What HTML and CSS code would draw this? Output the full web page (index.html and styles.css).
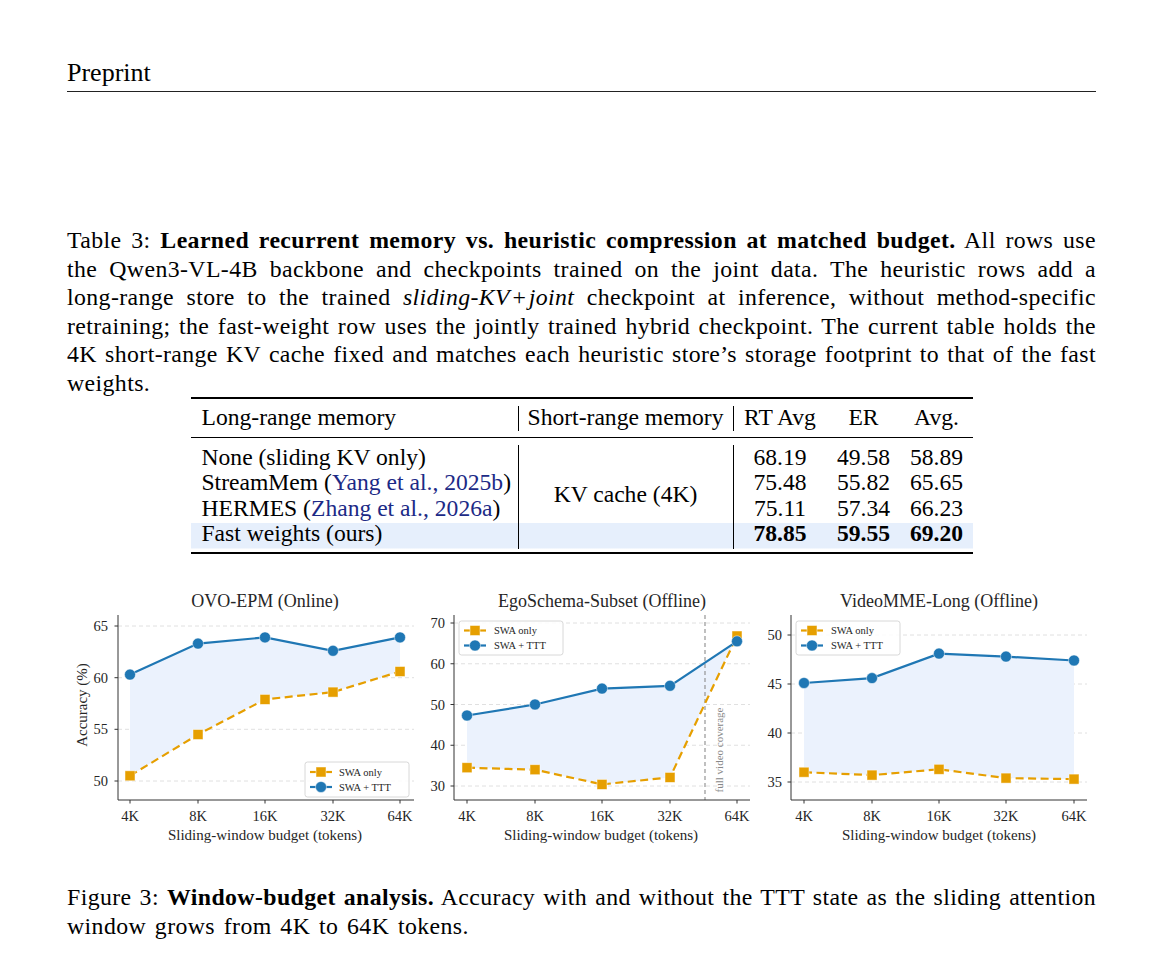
FILE: index.html
```html
<!DOCTYPE html>
<html lang="en">
<head>
  <meta charset="UTF-8">
  <meta name="viewport" content="width=device-width, initial-scale=1.0">
  <title>Preprint – Table 3 and Figure 3</title>
  <link rel="stylesheet" href="styles.css">
</head>
<body>
  <div class="page">

    <div class="running-head">Preprint</div>

    <p class="caption table-caption">
      <span class="line">Table 3: <b>Learned recurrent memory vs. heuristic compression at matched budget.</b> All rows use</span>
      <span class="line">the Qwen3-VL-4B backbone and checkpoints trained on the joint data. The heuristic rows add a</span>
      <span class="line">long-range store to the trained <i>sliding-KV</i>&#8202;+&#8202;<i>joint</i> checkpoint at inference, without method-specific</span>
      <span class="line">retraining; the fast-weight row uses the jointly trained hybrid checkpoint. The current table holds the</span>
      <span class="line">4K short-range KV cache fixed and matches each heuristic store’s storage footprint to that of the fast</span>
      <span class="line last">weights.</span>
    </p>

    <div class="results">
      <div class="results-head">
        <div class="hcell first">Long-range memory</div>
        <div class="hcell sep">Short-range memory</div>
        <div class="hcell">RT Avg</div>
        <div class="hcell">ER</div>
        <div class="hcell">Avg.</div>
      </div>
      <div class="results-body">
        <div class="cell first">None (sliding KV only)</div>
        <div class="cell kv">KV cache (4K)</div>
        <div class="cell">68.19</div>
        <div class="cell">49.58</div>
        <div class="cell">58.89</div>

        <div class="cell first">StreamMem (<a class="cite">Yang et al., 2025b</a>)</div>
        <div class="cell">75.48</div>
        <div class="cell">55.82</div>
        <div class="cell">65.65</div>

        <div class="cell first">HERMES (<a class="cite">Zhang et al., 2026a</a>)</div>
        <div class="cell">75.11</div>
        <div class="cell">57.34</div>
        <div class="cell">66.23</div>

        <div class="cell first">Fast weights (ours)</div>
        <div class="cell best">78.85</div>
        <div class="cell best">59.55</div>
        <div class="cell best">69.20</div>
      </div>
    </div>

    <div class="figure-row">
      <!-- OVO-EPM -->
      <svg class="chart" width="353" height="262" viewBox="0 0 353 262">
        <text class="c-title" x="198" y="19">OVO-EPM (Online)</text>
        <g class="grid">
          <line x1="51" x2="347" y1="193" y2="193"/>
          <line x1="51" x2="347" y1="141.3" y2="141.3"/>
          <line x1="51" x2="347" y1="89.7" y2="89.7"/>
          <line x1="51" x2="347" y1="38" y2="38"/>
        </g>
        <polygon class="gap" points="63,86.6 131,55.6 198,49.4 266,62.8 333,49.4 333,83.5 266,104.1 198,111.4 131,146.5 63,187.8"/>
        <polyline class="swa" points="63,187.8 131,146.5 198,111.4 266,104.1 333,83.5"/>
        <g class="sq">
          <rect x="58" y="182.8" width="10" height="10"/>
          <rect x="126" y="141.5" width="10" height="10"/>
          <rect x="193" y="106.4" width="10" height="10"/>
          <rect x="261" y="99.1" width="10" height="10"/>
          <rect x="328" y="78.5" width="10" height="10"/>
        </g>
        <polyline class="ttt" points="63,86.6 131,55.6 198,49.4 266,62.8 333,49.4"/>
        <g class="dot">
          <circle cx="63" cy="86.6" r="5.5"/>
          <circle cx="131" cy="55.6" r="5.5"/>
          <circle cx="198" cy="49.4" r="5.5"/>
          <circle cx="266" cy="62.8" r="5.5"/>
          <circle cx="333" cy="49.4" r="5.5"/>
        </g>
        <g class="axis">
          <line x1="51" x2="51" y1="27" y2="212"/>
          <line x1="51" x2="347" y1="212" y2="212"/>
          <line x1="47.5" x2="51" y1="193" y2="193"/>
          <line x1="47.5" x2="51" y1="141.3" y2="141.3"/>
          <line x1="47.5" x2="51" y1="89.7" y2="89.7"/>
          <line x1="47.5" x2="51" y1="38" y2="38"/>
          <line x1="63" x2="63" y1="212" y2="215.5"/>
          <line x1="131" x2="131" y1="212" y2="215.5"/>
          <line x1="198" x2="198" y1="212" y2="215.5"/>
          <line x1="266" x2="266" y1="212" y2="215.5"/>
          <line x1="333" x2="333" y1="212" y2="215.5"/>
        </g>
        <g class="ytick">
          <text x="41" y="198">50</text>
          <text x="41" y="146.3">55</text>
          <text x="41" y="94.7">60</text>
          <text x="41" y="43">65</text>
        </g>
        <g class="xtick">
          <text x="63" y="233">4K</text>
          <text x="131" y="233">8K</text>
          <text x="198" y="233">16K</text>
          <text x="266" y="233">32K</text>
          <text x="333" y="233">64K</text>
        </g>
        <text class="c-label" x="198" y="252">Sliding-window budget (tokens)</text>
        <text class="c-label" x="20" y="117" transform="rotate(-90 20 117)">Accuracy (%)</text>
        <g class="legend">
          <rect class="box" x="238" y="174" width="104" height="35" rx="2.5"/>
          <line class="swa" x1="243" x2="265" y1="184" y2="184"/>
          <rect class="sq-l" x="249" y="179" width="10" height="10"/>
          <line class="ttt" x1="243" x2="265" y1="199" y2="199"/>
          <circle class="dot-l" cx="254" cy="199" r="5.5"/>
          <text x="272" y="187.5">SWA only</text>
          <text x="272" y="202.5">SWA + TTT</text>
        </g>
      </svg>

      <!-- EgoSchema-Subset -->
      <svg class="chart" width="337" height="262" viewBox="0 0 337 262">
        <text class="c-title" x="182" y="19">EgoSchema-Subset (Offline)</text>
        <g class="grid">
          <line x1="34" x2="330" y1="198" y2="198"/>
          <line x1="34" x2="330" y1="157.25" y2="157.25"/>
          <line x1="34" x2="330" y1="116.5" y2="116.5"/>
          <line x1="34" x2="330" y1="75.75" y2="75.75"/>
          <line x1="34" x2="330" y1="35" y2="35"/>
        </g>
        <polygon class="gap" points="47,127.5 115,116.5 182,100.6 250,97.8 317,53.3 317,48 250,189.4 182,196.4 115,181.7 47,179.7"/>
        <line class="cover" x1="285" x2="285" y1="27" y2="212"/>
        <text class="cover-note" x="303" y="162" transform="rotate(-90 303 162)">full video coverage</text>
        <polyline class="swa" points="47,179.7 115,181.7 182,196.4 250,189.4 317,48"/>
        <g class="sq">
          <rect x="42" y="174.7" width="10" height="10"/>
          <rect x="110" y="176.7" width="10" height="10"/>
          <rect x="177" y="191.4" width="10" height="10"/>
          <rect x="245" y="184.4" width="10" height="10"/>
          <rect x="312" y="43" width="10" height="10"/>
        </g>
        <polyline class="ttt" points="47,127.5 115,116.5 182,100.6 250,97.8 317,53.3"/>
        <g class="dot">
          <circle cx="47" cy="127.5" r="5.5"/>
          <circle cx="115" cy="116.5" r="5.5"/>
          <circle cx="182" cy="100.6" r="5.5"/>
          <circle cx="250" cy="97.8" r="5.5"/>
          <circle cx="317" cy="53.3" r="5.5"/>
        </g>
        <g class="axis">
          <line x1="34" x2="34" y1="27" y2="212"/>
          <line x1="34" x2="330" y1="212" y2="212"/>
          <line x1="30.5" x2="34" y1="198" y2="198"/>
          <line x1="30.5" x2="34" y1="157.25" y2="157.25"/>
          <line x1="30.5" x2="34" y1="116.5" y2="116.5"/>
          <line x1="30.5" x2="34" y1="75.75" y2="75.75"/>
          <line x1="30.5" x2="34" y1="35" y2="35"/>
          <line x1="47" x2="47" y1="212" y2="215.5"/>
          <line x1="115" x2="115" y1="212" y2="215.5"/>
          <line x1="182" x2="182" y1="212" y2="215.5"/>
          <line x1="250" x2="250" y1="212" y2="215.5"/>
          <line x1="317" x2="317" y1="212" y2="215.5"/>
        </g>
        <g class="ytick">
          <text x="25" y="203">30</text>
          <text x="25" y="162.25">40</text>
          <text x="25" y="121.5">50</text>
          <text x="25" y="80.75">60</text>
          <text x="25" y="40">70</text>
        </g>
        <g class="xtick">
          <text x="47" y="233">4K</text>
          <text x="115" y="233">8K</text>
          <text x="182" y="233">16K</text>
          <text x="250" y="233">32K</text>
          <text x="317" y="233">64K</text>
        </g>
        <text class="c-label" x="181" y="252">Sliding-window budget (tokens)</text>
        <g class="legend">
          <rect class="box" x="39" y="33" width="104" height="34" rx="2.5"/>
          <line class="swa" x1="44" x2="66" y1="42.5" y2="42.5"/>
          <rect class="sq-l" x="50" y="37.5" width="10" height="10"/>
          <line class="ttt" x1="44" x2="66" y1="57.5" y2="57.5"/>
          <circle class="dot-l" cx="55" cy="57.5" r="5.5"/>
          <text x="74" y="46">SWA only</text>
          <text x="74" y="61">SWA + TTT</text>
        </g>
      </svg>

      <!-- VideoMME-Long -->
      <svg class="chart" width="339" height="262" viewBox="0 0 339 262">
        <text class="c-title" x="182" y="19">VideoMME-Long (Offline)</text>
        <g class="grid">
          <line x1="34" x2="330" y1="194" y2="194"/>
          <line x1="34" x2="330" y1="145" y2="145"/>
          <line x1="34" x2="330" y1="96" y2="96"/>
          <line x1="34" x2="330" y1="47" y2="47"/>
        </g>
        <polygon class="gap" points="47,95 115,90.1 182,65.6 249,68.6 317,72.5 317,191.1 249,190.1 182,181.3 115,187.1 47,184.2"/>
        <polyline class="swa" points="47,184.2 115,187.1 182,181.3 249,190.1 317,191.1"/>
        <g class="sq">
          <rect x="42" y="179.2" width="10" height="10"/>
          <rect x="110" y="182.1" width="10" height="10"/>
          <rect x="177" y="176.3" width="10" height="10"/>
          <rect x="244" y="185.1" width="10" height="10"/>
          <rect x="312" y="186.1" width="10" height="10"/>
        </g>
        <polyline class="ttt" points="47,95 115,90.1 182,65.6 249,68.6 317,72.5"/>
        <g class="dot">
          <circle cx="47" cy="95" r="5.5"/>
          <circle cx="115" cy="90.1" r="5.5"/>
          <circle cx="182" cy="65.6" r="5.5"/>
          <circle cx="249" cy="68.6" r="5.5"/>
          <circle cx="317" cy="72.5" r="5.5"/>
        </g>
        <g class="axis">
          <line x1="34" x2="34" y1="27" y2="212"/>
          <line x1="34" x2="330" y1="212" y2="212"/>
          <line x1="30.5" x2="34" y1="194" y2="194"/>
          <line x1="30.5" x2="34" y1="145" y2="145"/>
          <line x1="30.5" x2="34" y1="96" y2="96"/>
          <line x1="30.5" x2="34" y1="47" y2="47"/>
          <line x1="47" x2="47" y1="212" y2="215.5"/>
          <line x1="115" x2="115" y1="212" y2="215.5"/>
          <line x1="182" x2="182" y1="212" y2="215.5"/>
          <line x1="249" x2="249" y1="212" y2="215.5"/>
          <line x1="317" x2="317" y1="212" y2="215.5"/>
        </g>
        <g class="ytick">
          <text x="25" y="199">35</text>
          <text x="25" y="150">40</text>
          <text x="25" y="101">45</text>
          <text x="25" y="52">50</text>
        </g>
        <g class="xtick">
          <text x="47" y="233">4K</text>
          <text x="115" y="233">8K</text>
          <text x="182" y="233">16K</text>
          <text x="249" y="233">32K</text>
          <text x="317" y="233">64K</text>
        </g>
        <text class="c-label" x="182" y="252">Sliding-window budget (tokens)</text>
        <g class="legend">
          <rect class="box" x="39" y="33" width="104" height="34" rx="2.5"/>
          <line class="swa" x1="44" x2="66" y1="42.5" y2="42.5"/>
          <rect class="sq-l" x="50" y="37.5" width="10" height="10"/>
          <line class="ttt" x1="44" x2="66" y1="57.5" y2="57.5"/>
          <circle class="dot-l" cx="55" cy="57.5" r="5.5"/>
          <text x="74" y="46">SWA only</text>
          <text x="74" y="61">SWA + TTT</text>
        </g>
      </svg>
    </div>

    <p class="caption figure-caption">
      <span class="line">Figure 3: <b>Window-budget analysis.</b> Accuracy with and without the TTT state as the sliding attention</span>
      <span class="line last">window grows from 4K to 64K tokens.</span>
    </p>

  </div>
</body>
</html>
```

FILE: styles.css
```css
* { box-sizing: border-box; }
body {
  margin: 0;
  background: #fff;
  color: #000;
  font-family: "Liberation Serif", "Times New Roman", serif;
}
.page { width: 1029px; margin-left: 67px; }

/* running head */
.running-head {
  font-size: 26px; line-height: 30px;
  padding-top: 58px; padding-bottom: 3px;
  border-bottom: 1px solid #222;
}

/* captions, each line justified like the typeset page */
.caption { margin: 0; font-size: 23.8px; line-height: 28.5px; letter-spacing: 0.4px; }
.caption .line { display: block; text-align: justify; text-align-last: justify; }
.caption .line.last { text-align-last: left; }
.figure-caption .line.last { word-spacing: 2.4px; }
.table-caption { margin-top: 134px; }
.figure-caption { margin-top: 33px; }

/* results table */
.results {
  width: 782px; margin: 0 auto;
  border-top: 2px solid #000; border-bottom: 2px solid #000;
  font-size: 23.6px;
}
.results-head, .results-body {
  display: grid;
  grid-template-columns: 327px 216px 93px 74px 72px;
}
.results-head { height: 39px; border-bottom: 1px solid #000; align-items: start; }
.hcell { margin-top: 7px; height: 25px; line-height: 23px; text-align: center; }
.hcell.sep { border-left: 1px solid #000; border-right: 1px solid #000; }
.results-body {
  grid-template-rows: repeat(4, 25.5px);
  padding: 8.5px 0 3.5px;
  background: linear-gradient(#e6effc, #e6effc) no-repeat;
  background-size: 100% 25.5px;
  background-position: 0 calc(100% - 3.5px);
}
.cell { align-self: start; line-height: 21.5px; text-align: center; white-space: nowrap; }
.first { text-align: left; padding-left: 11px; }
.kv {
  grid-column: 2; grid-row: 1 / span 4;
  align-self: stretch;
  display: flex; align-items: center; justify-content: center;
  margin-top: -1.5px; padding-bottom: 4px;
  border-left: 1px solid #000; border-right: 1px solid #000;
}
.best { font-weight: bold; }
.cite { color: #1c2a86; text-decoration: none; }

/* charts */
.figure-row { display: flex; margin-top: 34px; }
.chart { display: block; font-family: "Liberation Serif", serif; }
.chart text { fill: #262626; }
.c-title { font-size: 18px; text-anchor: middle; }
.c-label { font-size: 15px; text-anchor: middle; }
.ytick text { font-size: 14.5px; text-anchor: end; }
.xtick text { font-size: 14.5px; text-anchor: middle; }
.grid line { stroke: #dcdcdc; stroke-width: 0.9; stroke-dasharray: 4 3; }
.axis line { stroke: #333; stroke-width: 1; }
.gap { fill: #ebf2fd; }
.swa { fill: none; stroke: #e69f00; stroke-width: 2.2; stroke-dasharray: 8 4.5; }
.ttt { fill: none; stroke: #1f77b4; stroke-width: 2.2; }
.sq rect, .sq-l { fill: #e69f00; stroke: #fff; stroke-opacity: 0.6; stroke-width: 0.8; }
.dot circle, .dot-l { fill: #1f77b4; stroke: #fff; stroke-opacity: 0.6; stroke-width: 0.8; }
.legend .box { fill: #fff; fill-opacity: 0.85; stroke: #d4d4d4; stroke-width: 0.9; }
.legend .swa { stroke-dasharray: none; }
.legend text { font-size: 10.5px; }
.cover { stroke: #8c8c8c; stroke-width: 1.1; stroke-dasharray: 4 3; }
.chart .cover-note { font-size: 11px; fill: #888; text-anchor: middle; }
```
